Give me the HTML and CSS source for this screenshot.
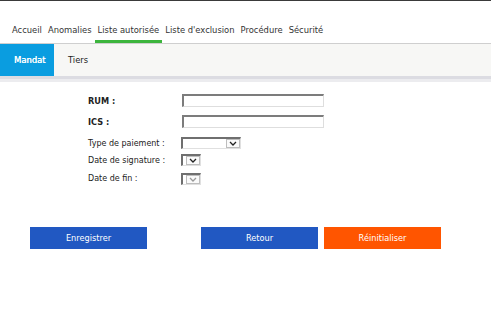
FILE: index.html
```html
<!DOCTYPE html>
<html lang="fr">
<head>
<meta charset="utf-8">
<title>Liste autorisée</title>
<link rel="stylesheet" href="styles.css">
</head>
<body>
<div class="topline"></div>
<nav class="tabs">
  <span class="tab">Accueil</span>
  <span class="tab">Anomalies</span>
  <span class="tab active">Liste autorisée</span>
  <span class="tab">Liste d'exclusion</span>
  <span class="tab">Procédure</span>
  <span class="tab">Sécurité</span>
</nav>
<div class="subnav">
  <span class="sub active">Mandat</span>
  <span class="sub">Tiers</span>
</div>
<div class="band"></div>
<form class="form">
  <div class="row r1"><label class="lbl bold">RUM :</label><span class="input"></span></div>
  <div class="row r2"><label class="lbl bold">ICS :</label><span class="input"></span></div>
  <div class="row r3"><label class="lbl">Type de paiement :</label><span class="select wide"><span class="arrow"><svg width="8" height="5" viewBox="0 0 8 5"><path d="M1 1 L4 4 L7 1" fill="none" stroke="#222" stroke-width="1.3"/></svg></span></span></div>
  <div class="row r4"><label class="lbl">Date de signature :</label><span class="select small"><span class="arrow"><svg width="8" height="5" viewBox="0 0 8 5"><path d="M1 1 L4 4 L7 1" fill="none" stroke="#222" stroke-width="1.3"/></svg></span></span></div>
  <div class="row r5"><label class="lbl">Date de fin :</label><span class="select small"><span class="arrow"><svg width="8" height="5" viewBox="0 0 8 5"><path d="M1 1 L4 4 L7 1" fill="none" stroke="#999" stroke-width="1.3"/></svg></span></span></div>
</form>
<div class="buttons">
  <span class="btn blue b1">Enregistrer</span>
  <span class="btn blue b2">Retour</span>
  <span class="btn orange b3">Réinitialiser</span>
</div>
</body>
</html>
```

FILE: styles.css
```css
* { box-sizing: border-box; }
html, body { margin: 0; padding: 0; background: #fff; }
body {
  font-family: "DejaVu Sans", Verdana, sans-serif;
  font-size: 9px;
  color: #222;
  width: 491px;
  height: 313px;
  overflow: hidden;
}
.topline { height: 1px; background: #3a3a3a; }
.tabs {
  display: flex;
  padding: 22px 0 0 9px;
  box-sizing: content-box;
  height: 20px;
  border-bottom: 1px solid #cfcfcf;
}
.tab {
  padding: 2px 3px 0 3px;
  height: 20px;
  color: #333;
  font-size: 8.4px;
  border-bottom: 3px solid transparent;
}
.tab.active { border-bottom-color: #3db53d; }
.subnav {
  display: flex;
  height: 32px;
  background: #f7f7f5;
}
.sub {
  display: flex;
  align-items: center;
  padding: 0 14px;
  font-size: 8.4px;
  color: #222;
}
.sub.active {
  background: #0a9de0;
  color: #fff;
  width: 54px;
  text-shadow: 0.3px 0 0 #fff;
}
.band {
  height: 6px;
  background: linear-gradient(#dcdce2 0, #dcdce2 3px, #ececef 3px);
}
.form {
  display: flex;
  flex-direction: column;
  padding: 12px 0 0 88px;
}
.row {
  display: grid;
  grid-template-columns: 94px auto;
  align-items: center;
}
.r1 { height: 13px; }
.r2 { height: 13px; margin-top: 8px; }
.r3 { height: 12px; margin-top: 9px; }
.r4 { height: 12px; margin-top: 5px; }
.r5 { height: 13px; margin-top: 6px; }
.lbl { font-size: 8px; color: #222; }
.lbl.bold { font-weight: bold; font-size: 8.2px; }
.input {
  display: block;
  width: 142px;
  height: 13px;
  border-style: solid;
  border-width: 2px 1px 1px 2px;
  border-color: #7c7c7c #dedede #dedede #7c7c7c;
  background: #fff;
}
.select {
  display: flex;
  justify-content: flex-end;
  height: 12px;
  margin-left: -1px;
  border-style: solid;
  border-width: 2px 1px 1px 2px;
  border-color: #6f6f6f #e0e0e0 #e0e0e0 #6f6f6f;
  background: #fff;
}
.select.wide { width: 60px; }
.select.small { width: 20px; }
.arrow {
  width: 14px;
  height: 100%;
  display: flex;
  align-items: center;
  justify-content: center;
  border: 1px solid #bdbdbd;
  background: #fafafa;
}
.buttons {
  display: flex;
  padding: 42px 0 0 30px;
}
.btn {
  display: flex;
  align-items: center;
  justify-content: center;
  width: 117px;
  height: 22px;
  color: #fff;
  font-size: 8.2px;
}
.blue { background: #2158c2; }
.orange { background: #ff5500; }
.b2 { margin-left: 54px; }
.b3 { margin-left: 6px; }
```
